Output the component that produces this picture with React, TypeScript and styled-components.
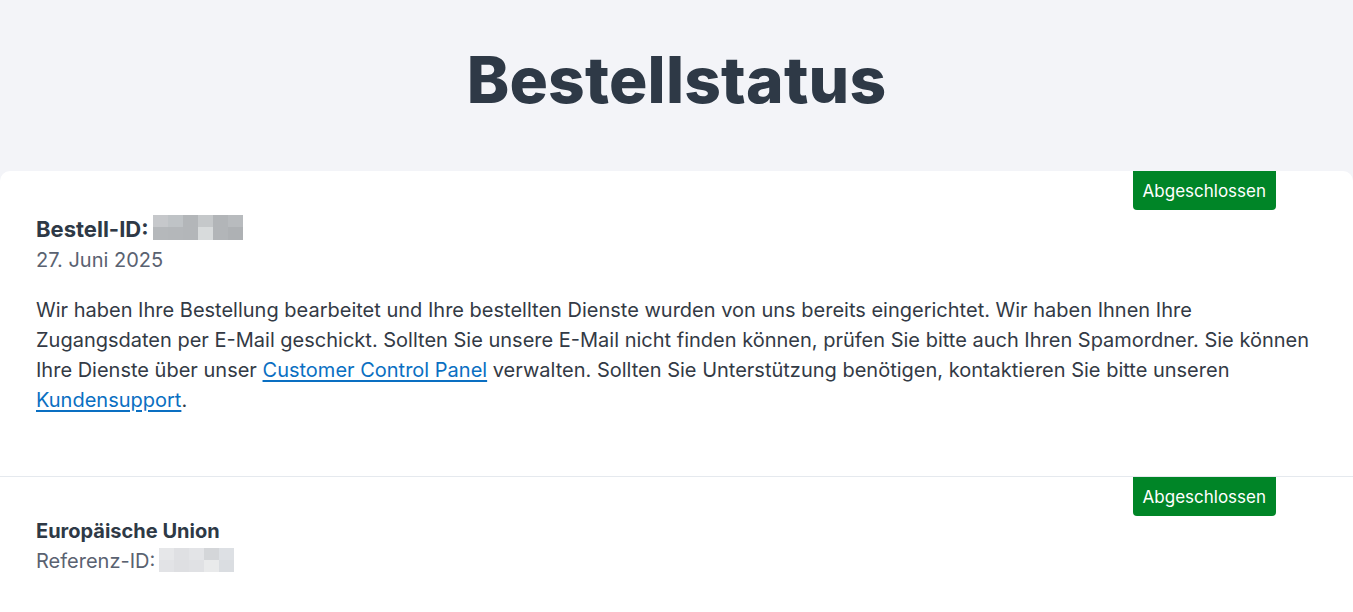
import React from "react";
import styled, { createGlobalStyle } from "styled-components";

const GlobalStyle = createGlobalStyle`
  html, body {
    margin: 0;
    padding: 0;
    background: #f3f4f8;
    font-family: Inter, "Noto Sans", sans-serif;
    color: #333a45;
  }
  * { box-sizing: border-box; }
`;

const Page = styled.div`
  min-height: 612px;
  display: flex;
  flex-direction: column;
`;

const Header = styled.header`
  height: 171px;
  padding-top: 41px;
  text-align: center;
`;

const Title = styled.h1`
  margin: 0;
  font-size: 64px;
  line-height: 77px;
  font-weight: 800;
  color: #2e3946;
  letter-spacing: 0.2px;
`;

const Card = styled.main`
  flex: 1;
  background: #ffffff;
  border-radius: 10px 10px 0 0;
`;

const Section = styled.section<{ $bottom?: number; $divider?: boolean }>`
  padding: 0 36px ${(p) => p.$bottom ?? 0}px 36px;
  border-bottom: ${(p) => (p.$divider ? "1px solid #e5e9ee" : "none")};
`;

const BadgeRow = styled.div`
  display: flex;
  justify-content: flex-end;
  padding-right: 41px;
`;

const Badge = styled.span`
  display: inline-flex;
  align-items: center;
  height: 39px;
  padding: 0 10px;
  background: #008527;
  color: #ffffff;
  font-size: 17px;
  border-radius: 0 0 4px 4px;
`;

const OrderTitle = styled.div`
  margin-top: 3px;
  display: flex;
  align-items: center;
  font-size: 22px;
  line-height: 32px;
  font-weight: 700;
  color: #2e3946;
`;

const Subtitle = styled.div`
  font-size: 20px;
  line-height: 30px;
  font-weight: 700;
  color: #2e3946;
`;

const Meta = styled.div`
  display: flex;
  align-items: center;
  font-size: 20px;
  line-height: 30px;
  color: #5a6271;
`;

const Text = styled.p`
  margin: 20px 0 0 0;
  font-size: 20px;
  line-height: 30px;
  color: #333a45;
`;

const Link = styled.a`
  color: #0a6fc2;
  text-decoration: underline;
  text-underline-offset: 3px;
`;

const Blur = styled.span<{ $cols: number; $rowH: number; $ml: number; $dy: number }>`
  display: inline-grid;
  grid-template-columns: repeat(${(p) => p.$cols}, 15px);
  grid-auto-rows: ${(p) => p.$rowH}px;
  margin-left: ${(p) => p.$ml}px;
  position: relative;
  top: ${(p) => p.$dy}px;
`;

const Cell = styled.span<{ $c: string }>`
  background: ${(p) => p.$c};
`;

const orderCells = [
  "#c6c8cb", "#bfc3c6", "#b3b6b9", "#c5c8ca", "#b2b5b8", "#b8bbbe",
  "#b5b8bb", "#b4b7ba", "#b3b6b9", "#d8dbdc", "#b2b5b8", "#aeb1b4",
];

const refCells = [
  "#e6e7e9", "#dfe0e3", "#e3e4e7", "#d4d6d9", "#dde0e4",
  "#e2e3e6", "#dedfe2", "#e0e1e4", "#e9eaeb", "#dadde1",
];

export default function App() {
  return (
    <>
      <GlobalStyle />
      <Page>
        <Header>
          <Title>Bestellstatus</Title>
        </Header>
        <Card>
          <Section $bottom={61} $divider>
            <BadgeRow>
              <Badge>Abgeschlossen</Badge>
            </BadgeRow>
            <OrderTitle>
              Bestell-ID:
              <Blur $cols={6} $rowH={12.5} $ml={4} $dy={-2}>
                {orderCells.map((c, i) => (
                  <Cell key={i} $c={c} />
                ))}
              </Blur>
            </OrderTitle>
            <Meta>27. Juni 2025</Meta>
            <Text>
              Wir haben Ihre Bestellung bearbeitet und Ihre bestellten Dienste wurden von uns bereits
              eingerichtet. Wir haben Ihnen Ihre Zugangsdaten per E-Mail geschickt. Sollten Sie unsere
              E-Mail nicht finden können, prüfen Sie bitte auch Ihren Spamordner. Sie können Ihre Dienste
              über unser <Link href="#">Customer Control Panel</Link> verwalten. Sollten Sie Unterstützung
              benötigen, kontaktieren Sie bitte unseren <Link href="#">Kundensupport</Link>.
            </Text>
          </Section>
          <Section>
            <BadgeRow>
              <Badge>Abgeschlossen</Badge>
            </BadgeRow>
            <Subtitle>Europäische Union</Subtitle>
            <Meta>
              Referenz-ID:
              <Blur $cols={5} $rowH={12} $ml={4} $dy={-1}>
                {refCells.map((c, i) => (
                  <Cell key={i} $c={c} />
                ))}
              </Blur>
            </Meta>
          </Section>
        </Card>
      </Page>
    </>
  );
}
